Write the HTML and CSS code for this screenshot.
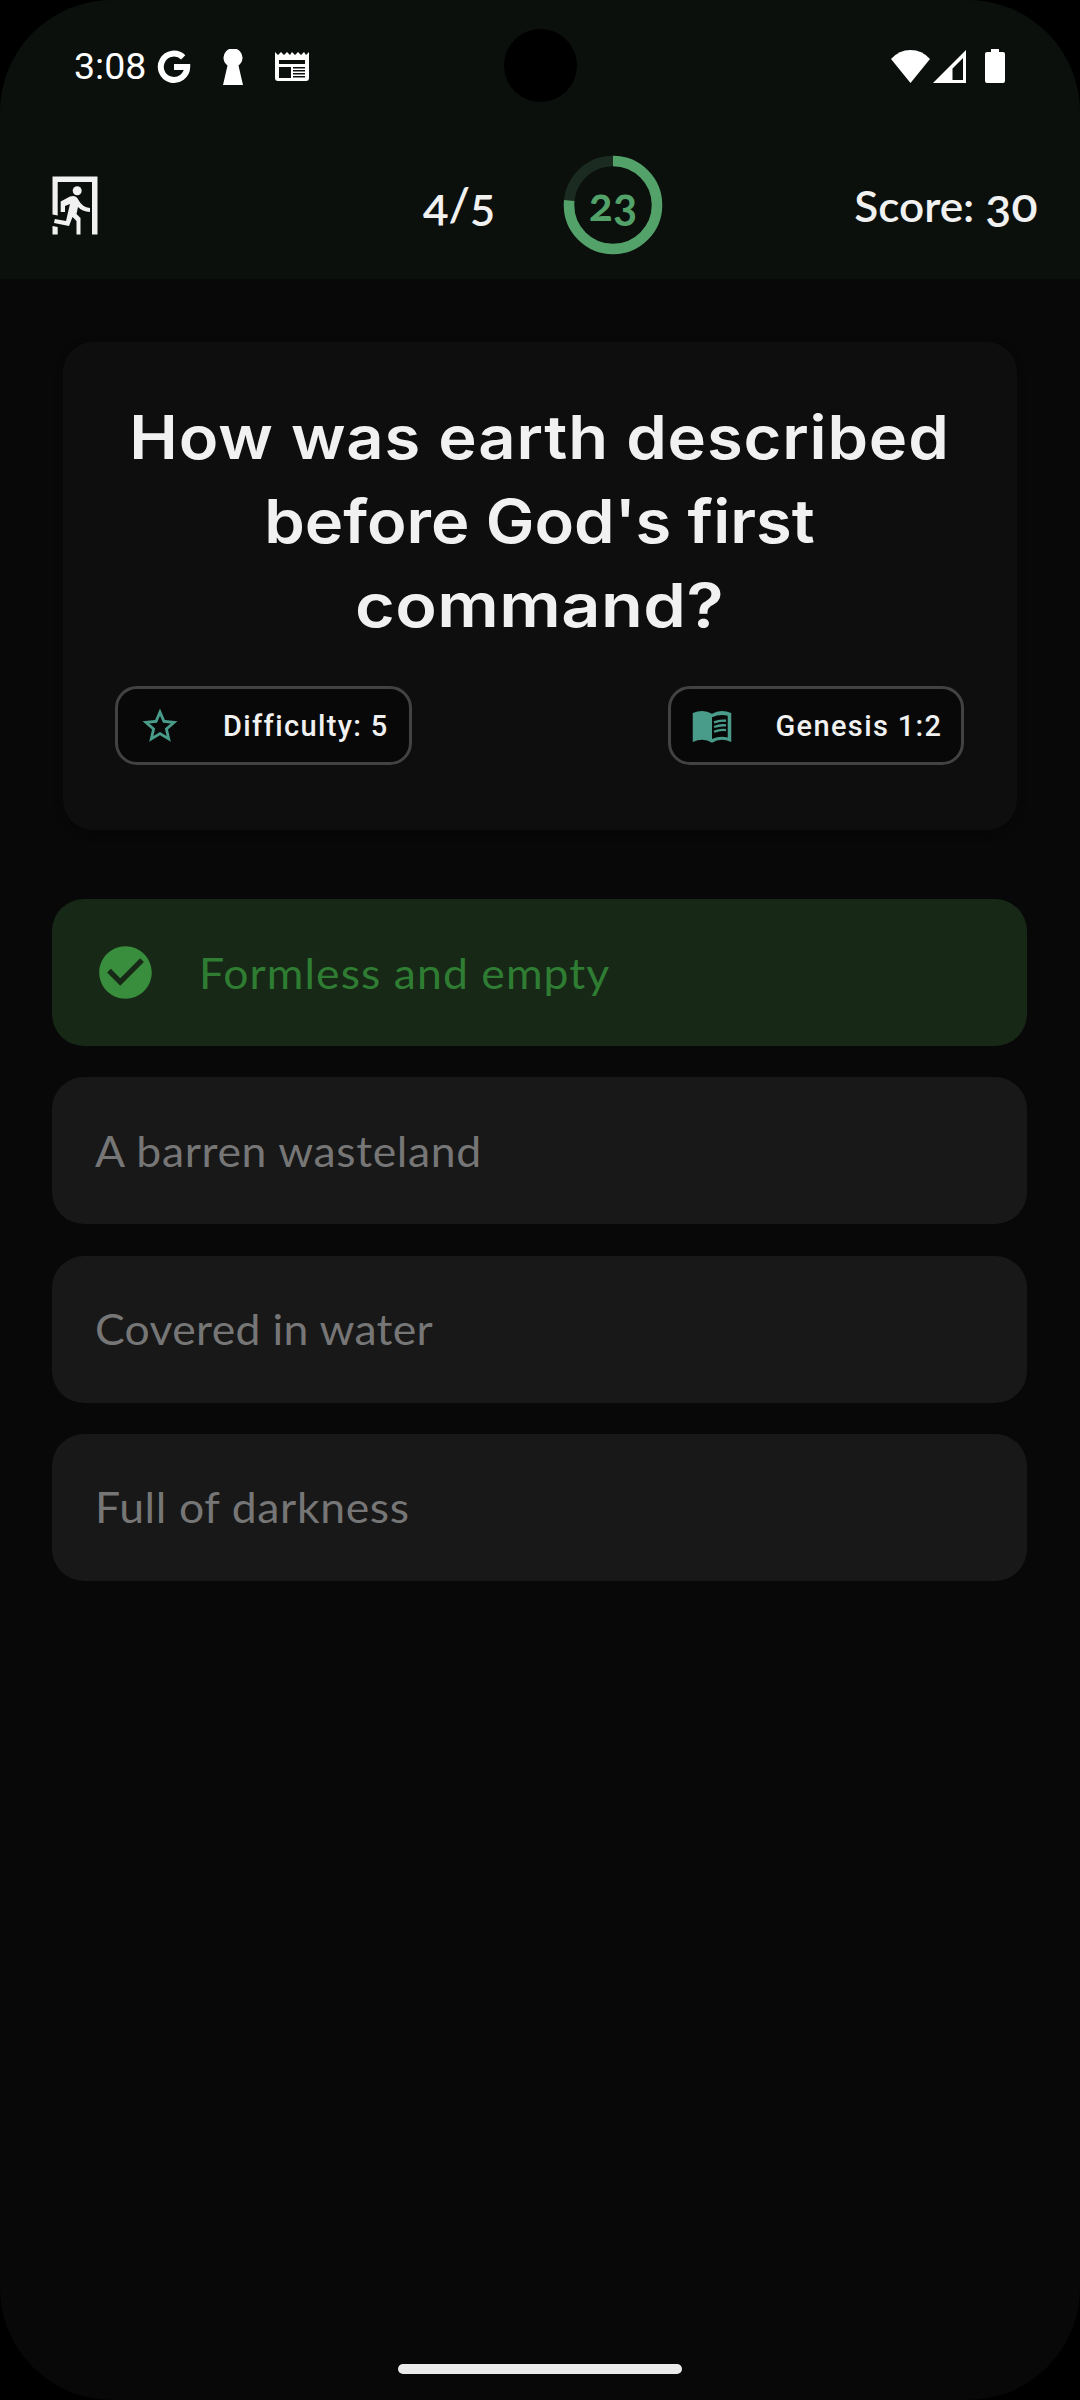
FILE: index.html
```html
<!DOCTYPE html>
<html lang="en">
<head>
<meta charset="utf-8">
<title>Bible Quiz</title>
<link rel="stylesheet" href="styles.css">
</head>
<body>
<div class="screen">
  <header class="top">
    <div class="status">
      <div class="status-left">
        <span class="clock">3:08</span>
        <svg class="g-icon" width="34" height="34" viewBox="0 0 34 34"><path d="M26.200 7.300A13.200 13.200 0 1 0 30.200 17H17" fill="none" stroke="#fff" stroke-width="6"/></svg>
        <svg class="key-icon" width="20" height="36" viewBox="0 0 20 36"><path d="M4.500 16.500A9.500 9.500 0 1 1 15.500 16.500L20 36H0Z" fill="#fff"/></svg>
        <svg class="news-icon" width="34" height="32" viewBox="0 0 34 32"><path fill="#fff" fill-rule="evenodd" d="M0 1l3 3 3-3 3 3 3-3 3 3 2-3 3 3 3-3 3 3 3-3 2 3 3-3V27a3 3 0 0 1-3 3H3a3 3 0 0 1-3-3ZM4 9v4h26V9ZM4 16v11h12V16ZM18 16v1.500h12V16ZM18 19v1.500h12V19ZM18 22v1.500h12V22ZM18 25v1.500h12V25Z"/></svg>
      </div>
      <div class="status-right">
        <svg width="39" height="33" viewBox="0 0 39 33"><path fill="#fff" d="M0 9Q8 0 19.500 0T39 9L19.500 33Z"/></svg>
        <svg class="signal-icon" width="33" height="33" viewBox="0 0 33 33"><path fill="#fff" fill-rule="evenodd" d="M33 0V33H0ZM30 8L19.500 18.500V30H30Z"/></svg>
        <svg class="battery-icon" width="20" height="34" viewBox="0 0 20 34"><path fill="#fff" d="M6 0h8v3h4a2 2 0 0 1 2 2v27a2 2 0 0 1-2 2H2a2 2 0 0 1-2-2V5a2 2 0 0 1 2-2h4Z"/></svg>
      </div>
      <i class="camera"></i>
    </div>
    <div class="bar">
      <svg class="exit-icon" width="46" height="60" viewBox="0 0 46 60"><g fill="#f1f1f1"><path d="M.5 .5H45.500V58.500H40V6H5.700V39.500L.5 38.500ZM.5 50l5.200 1v7.500H.5Z"/><circle cx="25.200" cy="14.800" r="4.500"/><path d="M18 20.500L21.500 20Q25 20.500 26.500 24Q30 31 38 32V36Q30 35.500 26 31L24.500 38L28.500 42V58.500H24.500V45L20.500 41L17 50L2 47L2.800 43L14 45L18 28L13 30V36H8.700V25.500Z"/></g></svg>
      <span class="count">4/5</span>
      <div class="timer">
        <svg width="100" height="100" viewBox="0 0 100 100"><g fill="none" stroke-width="10.500"><circle cx="50" cy="50" r="44" stroke="#1b2b21"/><circle cx="50" cy="50" r="44" stroke="#53a269" pathLength="30" stroke-dasharray="23 7" transform="rotate(-90 50 50)"/></g></svg>
        <span class="seconds">23</span>
      </div>
      <span class="score">Score: <span class="points">30</span></span>
    </div>
  </header>
  <main>
    <section class="card">
      <h1><span class="line opening">How was earth described</span><span class="line">before God's first</span><span class="line closing">command?</span></h1>
      <div class="chips">
        <div class="chip">
          <svg width="42" height="42" viewBox="0 0 24 24"><path fill="#4a9c8a" d="M22 9.240l-7.190-.62L12 2 9.190 8.630 2 9.240l5.460 4.730L5.820 21 12 17.270 18.180 21l-1.630-7.030L22 9.240zM12 15.400l-3.760 2.270 1-4.280-3.320-2.880 4.380-.38L12 6.100l1.710 4.040 4.380.38-3.320 2.880 1 4.280L12 15.400z"/></svg>
          <span>Difficulty: 5</span>
        </div>
        <div class="chip">
          <svg width="42" height="42" viewBox="0 0 24 24"><path fill="#4a9c8a" fill-rule="evenodd" d="M12 5Q7 2 1 4.600V21.200Q7 18.500 12 21.500Q17 18.500 23 21.200V4.600Q17 2 12 5ZM21 6.100V18.500Q16.500 17.400 12 19.400V7Q16.500 5 21 6.100Z"/><path d="M13.200 9.900Q16.600 8.500 20 9M13.200 12.600Q16.600 11.200 20 11.700M13.200 15.300Q16.600 13.900 20 14.400" fill="none" stroke="#4a9c8a" stroke-width="1.300"/></svg>
          <span>Genesis 1:2</span>
        </div>
      </div>
    </section>
    <ul class="options">
      <li class="option correct">
        <svg width="63" height="63" viewBox="0 0 24 24"><path fill="#388e3c" d="M12 2C6.480 2 2 6.480 2 12s4.480 10 10 10 10-4.480 10-10S17.520 2 12 2zm-2 15l-5-5 1.410-1.410L10 14.170l7.590-7.590L19 8l-9 9z"/></svg>
        <span class="answer">Formless and empty</span>
      </li>
      <li class="option"><span class="answer">A barren wasteland</span></li>
      <li class="option"><span class="answer tight">Covered in water</span></li>
      <li class="option"><span class="answer">Full of darkness</span></li>
    </ul>
  </main>
  <i class="home"></i>
</div>
</body>
</html>
```
FILE: styles.css
```css
* { box-sizing: border-box; margin: 0; padding: 0; }
body { background: #000; }
svg, i { display: block; flex: none; }
.screen {
  display: flex; flex-direction: column;
  width: 1080px; height: 2400px;
  border-radius: 112px; overflow: hidden;
  background: #080808; color: #f1f1f1;
  font-family: Lato, "Liberation Sans", sans-serif;
  white-space: nowrap;
}
.top { height: 279px; background: #0b100d; }
.status { position: relative; height: 132px; padding: 0 75px 0 74px; display: flex; justify-content: space-between; color: #fff; }
.status-left, .status-right { display: flex; align-items: center; }
.clock { font: 37.500px/132px Roboto, sans-serif; width: 83px; }
.g-icon { margin: 2px 32px 0 0; }
.key-icon { margin: 2px 32px 0 0; }
.news-icon { margin-top: 2px; }
.signal-icon { margin: 0 19px 0 3px; }
.camera { position: absolute; left: 504px; top: 29px; width: 73px; height: 73px; border-radius: 50%; background: #000; }
.bar { height: 147px; padding: 0 43px 0 52px; display: flex; align-items: center; font-size: 42px; font-weight: 600; font-variant-numeric: oldstyle-nums; }
.count { margin-left: 325px; width: 140px; font-size: 47px; line-height: 50px; padding-bottom: 6px; }
.timer { display: grid; place-items: center; color: #53a269; font-size: 45px; font-weight: 700; }
.timer > * { grid-area: 1 / 1; }
.timer svg { margin-bottom: 1px; }
.seconds { padding-bottom: 4px; }
.score { margin-left: auto; transform: scaleX(1.05); transform-origin: right; }
.points { font-size: 46px; line-height: 1; }
.card {
  height: 488px; margin: 63px 63px 0; padding: 53px 53px 53px 52px;
  border-radius: 30px; background: #0e0e0e;
  box-shadow: 0 3px 8px rgba(0, 0, 0, .3);
}
h1 { font: 600 60.500px/84px Inter, sans-serif; text-align: center; }
.line { display: block; transform: scaleX(1.075); }
.opening { letter-spacing: .8px; }
.closing { transform: scaleX(1.130); letter-spacing: .4px; }
.chips { margin-top: 39px; display: flex; justify-content: space-between; }
.chip {
  width: 296.500px; height: 79px; padding-left: 20.500px;
  display: flex; align-items: center; gap: 42.500px;
  border: 3px solid #424242; border-radius: 22px; background: #080808;
  font: 500 29px Roboto, sans-serif; letter-spacing: 1.350px;
}
.options { margin: 69px 53px 0 52px; display: grid; gap: 31.330px; list-style: none; }
.option {
  height: 147px; padding: 0 43px; display: flex; align-items: center;
  border-radius: 32px; background: #181818; color: #767676; font-size: 42px;
}
.answer { transform: scaleX(1.06); transform-origin: left; letter-spacing: .6px; }
.tight { letter-spacing: .3px; }
.correct { padding-left: 42px; gap: 42px; background: #172817; color: #2e7d32; }
.correct .answer { letter-spacing: 1px; }
.home { width: 284px; height: 10px; margin: auto auto 26px; border-radius: 5px; background: #ebebeb; }
```
